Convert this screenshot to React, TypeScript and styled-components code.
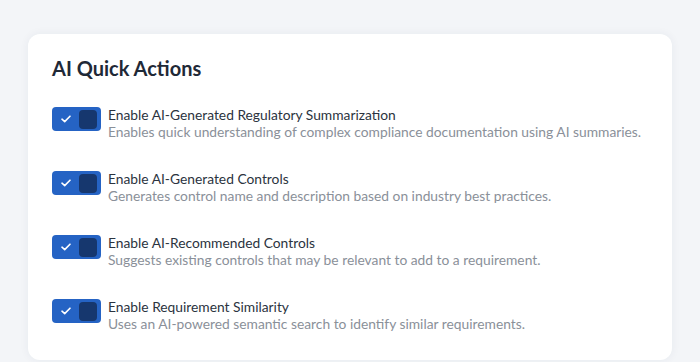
import styled, { createGlobalStyle } from 'styled-components';

const GlobalStyle = createGlobalStyle`
  html, body {
    margin: 0;
    padding: 0;
    background: #f3f5f8;
    font-family: Lato, "Noto Sans", sans-serif;
  }
`;

const Page = styled.div`
  padding: 34px 28px 2px 28px;
  height: 362px;
  box-sizing: border-box;
  overflow: hidden;
`;

const Card = styled.section`
  background: #ffffff;
  border-radius: 12px;
  box-shadow: 0 0 10px rgba(30, 50, 90, 0.06);
  padding: 22px 24px 20px 24px;
  height: 326px;
  box-sizing: border-box;
`;

const Title = styled.h2`
  margin: 0 0 26px 0;
  font-size: 20px;
  font-weight: 700;
  color: #1f2937;
  line-height: 24px;
`;

const List = styled.div`
  display: flex;
  flex-direction: column;
  gap: 30px;
`;

const Row = styled.div`
  display: flex;
  align-items: flex-start;
  gap: 7px;
`;

const Toggle = styled.button<{ $on: boolean }>`
  flex: none;
  width: 49px;
  height: 24px;
  margin-top: 1px;
  border: none;
  border-radius: 4px;
  padding: 0 4px 0 9px;
  background: ${(p) => (p.$on ? '#2563c4' : '#cbd2dc')};
  display: flex;
  align-items: center;
  justify-content: space-between;
  cursor: pointer;
`;

const Thumb = styled.span`
  width: 18px;
  height: 19px;
  border-radius: 4px;
  background: #16376e;
`;

const Text = styled.div`
  display: flex;
  flex-direction: column;
`;

const Label = styled.div`
  font-size: 13.8px;
  line-height: 17px;
  color: #2b3340;
`;

const Desc = styled.div`
  font-size: 13.8px;
  line-height: 17px;
  color: #8a9099;
`;

const items = [
  {
    label: 'Enable AI-Generated Regulatory Summarization',
    desc: 'Enables quick understanding of complex compliance documentation using AI summaries.',
  },
  {
    label: 'Enable AI-Generated Controls',
    desc: 'Generates control name and description based on industry best practices.',
  },
  {
    label: 'Enable AI-Recommended Controls',
    desc: 'Suggests existing controls that may be relevant to add to a requirement.',
  },
  {
    label: 'Enable Requirement Similarity',
    desc: 'Uses an AI-powered semantic search to identify similar requirements.',
  },
];

const Check = () => (
  <svg width="10" height="8" viewBox="0 0 10 8" fill="none">
    <path d="M1 4.2L3.7 6.6L9 1.2" stroke="#ffffff" strokeWidth="1.6" strokeLinecap="round" strokeLinejoin="round" />
  </svg>
);

export default function App() {
  return (
    <>
      <GlobalStyle />
      <Page>
        <Card>
          <Title>AI Quick Actions</Title>
          <List>
            {items.map((item) => (
              <Row key={item.label}>
                <Toggle $on type="button" aria-pressed="true">
                  <Check />
                  <Thumb />
                </Toggle>
                <Text>
                  <Label>{item.label}</Label>
                  <Desc>{item.desc}</Desc>
                </Text>
              </Row>
            ))}
          </List>
        </Card>
      </Page>
    </>
  );
}
